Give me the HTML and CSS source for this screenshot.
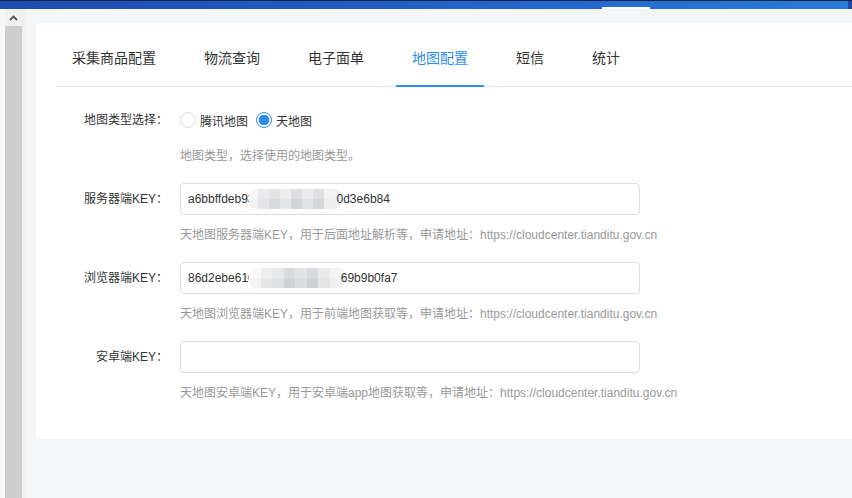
FILE: index.html
```html
<!DOCTYPE html>
<html lang="zh-CN">
<head>
    <meta charset="UTF-8">
    <meta name="viewport" content="width=device-width, initial-scale=1.0">
    <title>地图配置</title>
    <link rel="stylesheet" href="styles.css">
</head>
<body>
    <div id="topBar">
        <span class="topMark"></span>
    </div>
    <div id="main">
        <div class="gutter"></div>
        <div class="scrollbar">
            <div class="scrollUp">
                <svg width="9" height="6" viewBox="0 0 9 6"><path d="M1 5 L4.5 1.5 L8 5" fill="none" stroke="#555" stroke-width="1.8"/></svg>
            </div>
            <div class="scrollTrack"></div>
        </div>
        <div id="pageArea">
            <div id="card">
                <div class="tabNav">
                    <div class="tab">采集商品配置</div>
                    <div class="tab">物流查询</div>
                    <div class="tab">电子面单</div>
                    <div class="tab active">地图配置</div>
                    <div class="tab">短信</div>
                    <div class="tab">统计</div>
                </div>

                <div class="form">
                    <div class="formItem">
                        <label class="formLabel">地图类型选择：</label>
                        <div class="formControl">
                            <div class="radioGroup">
                                <span class="radioItem"><span class="radio"></span>腾讯地图</span>
                                <span class="radioItem"><span class="radio checked"></span>天地图</span>
                            </div>
                            <div class="help">地图类型，选择使用的地图类型。</div>
                        </div>
                    </div>

                    <div class="formItem">
                        <label class="formLabel">服务器端KEY：</label>
                        <div class="formControl">
                            <div class="field"><span>a6bbffdeb93</span><span class="mosaic mosaicA"></span><span>0d3e6b84</span></div>
                            <div class="help">天地图服务器端KEY，用于后面地址解析等，申请地址：https://cloudcenter.tianditu.gov.cn</div>
                        </div>
                    </div>

                    <div class="formItem">
                        <label class="formLabel">浏览器端KEY：</label>
                        <div class="formControl">
                            <div class="field"><span>86d2ebe610</span><span class="mosaic mosaicB"></span><span>69b9b0fa7</span></div>
                            <div class="help">天地图浏览器端KEY，用于前端地图获取等，申请地址：https://cloudcenter.tianditu.gov.cn</div>
                        </div>
                    </div>

                    <div class="formItem">
                        <label class="formLabel">安卓端KEY：</label>
                        <div class="formControl">
                            <div class="field"></div>
                            <div class="help">天地图安卓端KEY，用于安卓端app地图获取等，申请地址：https://cloudcenter.tianditu.gov.cn</div>
                        </div>
                    </div>
                </div>
            </div>
        </div>
    </div>
</body>
</html>
```

FILE: styles.css
```css
html, body{
    margin: 0;
    padding: 0;
    height: 100%;
}

body{
    display: flex;
    flex-direction: column;
    background-color: #f5f6f8;
    font-family: 'Liberation Sans', 'Noto Sans CJK SC', sans-serif;
    color: #333;
    overflow: hidden;
}

#topBar{
    height: 8px;
    border-top: 1px solid #13264d;
    background: linear-gradient(90deg, #1f4cae 0%, #2260c4 50%, #2a7ad9 99.5%, #1d47a0 99.6%);
    display: flex;
    align-items: flex-end;
    box-shadow: 0 1px 2px rgba(0, 0, 0, 0.08);
    flex-shrink: 0;
}

.topMark{
    width: 48px;
    height: 2px;
    margin-left: 602px;
    background-color: #fff;
}

#main{
    flex: 1;
    display: flex;
    min-height: 0;
}

.gutter{
    width: 5px;
    background-color: #f7f7f7;
}

.scrollbar{
    width: 17px;
    display: flex;
    flex-direction: column;
}

.scrollUp{
    height: 17px;
    background-color: #f1f1f1;
    display: flex;
    align-items: center;
    justify-content: center;
}

.scrollTrack{
    flex: 1;
    background-color: #cdcdcd;
}

#pageArea{
    flex: 1;
    padding: 14px 0 0 14px;
    background: linear-gradient(90deg, #eceef0 0, #f5f6f8 6px);
}

#card{
    background-color: #fff;
    border-radius: 4px 0 0 4px;
    padding: 12px 0 36px 20px;
}

.tabNav{
    display: flex;
    gap: 16px;
    border-bottom: 1px solid #e4e7ed;
}

.tab{
    padding: 12px 16px 16px;
    font-size: 14px;
    line-height: 22px;
    color: #333;
    border-bottom: 2px solid transparent;
    margin-bottom: -1px;
}

.tab.active{
    color: #2d8cf0;
    border-bottom-color: #2d8cf0;
}

.form{
    padding-top: 17px;
}

.formItem{
    display: flex;
    margin-bottom: 17px;
}

.formItem:last-child{
    margin-bottom: 0;
}

.formLabel{
    width: 112px;
    padding-right: 12px;
    text-align: right;
    font-size: 12px;
    line-height: 32px;
    color: #333;
}

.radioGroup{
    display: flex;
    gap: 8px;
    height: 32px;
    align-items: center;
    font-size: 12px;
}

.radioItem{
    display: flex;
    align-items: center;
    gap: 4px;
}

.radio{
    box-sizing: border-box;
    width: 16px;
    height: 16px;
    border: 1px solid #dcdee2;
    border-radius: 50%;
    background-color: #fff;
}

.radio.checked{
    border-color: #2d8cf0;
    background: radial-gradient(circle, #2d8cf0 0, #2d8cf0 5px, #fff 5.5px);
}

.field{
    box-sizing: border-box;
    width: 460px;
    height: 32px;
    border: 1px solid #dcdee2;
    border-radius: 4px;
    padding: 0 7px;
    font-size: 12px;
    line-height: 30px;
    color: #333;
    display: flex;
    align-items: center;
    white-space: nowrap;
}

.mosaic{
    display: inline-block;
    height: 20px;
    margin-left: -6px;
    margin-right: -4px;
    background-repeat: no-repeat;
    background-size: 100% 50%;
    background-position: top, bottom;
    border-radius: 6px;
}

.mosaicA{
    width: 92px;
    background-image:
        linear-gradient(90deg, #f6f6f7 0 10%, #e9e9eb 10% 22%, #e2e3e5 22% 34%, #eeeeef 34% 46%, #dddee0 46% 58%, #ebebed 58% 70%, #dfe0e2 70% 82%, #f2f2f3 82% 100%),
        linear-gradient(90deg, #f3f3f4 0 10%, #e4e4e6 10% 22%, #d9dadd 22% 34%, #e6e7e9 34% 46%, #d3d4d7 46% 58%, #e1e2e4 58% 70%, #d6d7da 70% 82%, #eeeeef 82% 100%);
}

.mosaicB{
    width: 96px;
    background-image:
        linear-gradient(90deg, #fafafa 0 12%, #efeff0 12% 24%, #e7e8ea 24% 36%, #dadbde 36% 48%, #e3e4e6 48% 60%, #d8d9dc 60% 72%, #e9eaec 72% 84%, #f4f4f5 84% 100%),
        linear-gradient(90deg, #f4f4f5 0 12%, #e6e7e9 12% 24%, #dfe0e2 24% 36%, #d0d1d5 36% 48%, #dcdde0 48% 60%, #cfd0d4 60% 72%, #e3e4e6 72% 84%, #f0f0f1 84% 100%);
}

.help{
    margin-top: 10px;
    font-size: 12px;
    line-height: 20px;
    color: #999;
}
```
